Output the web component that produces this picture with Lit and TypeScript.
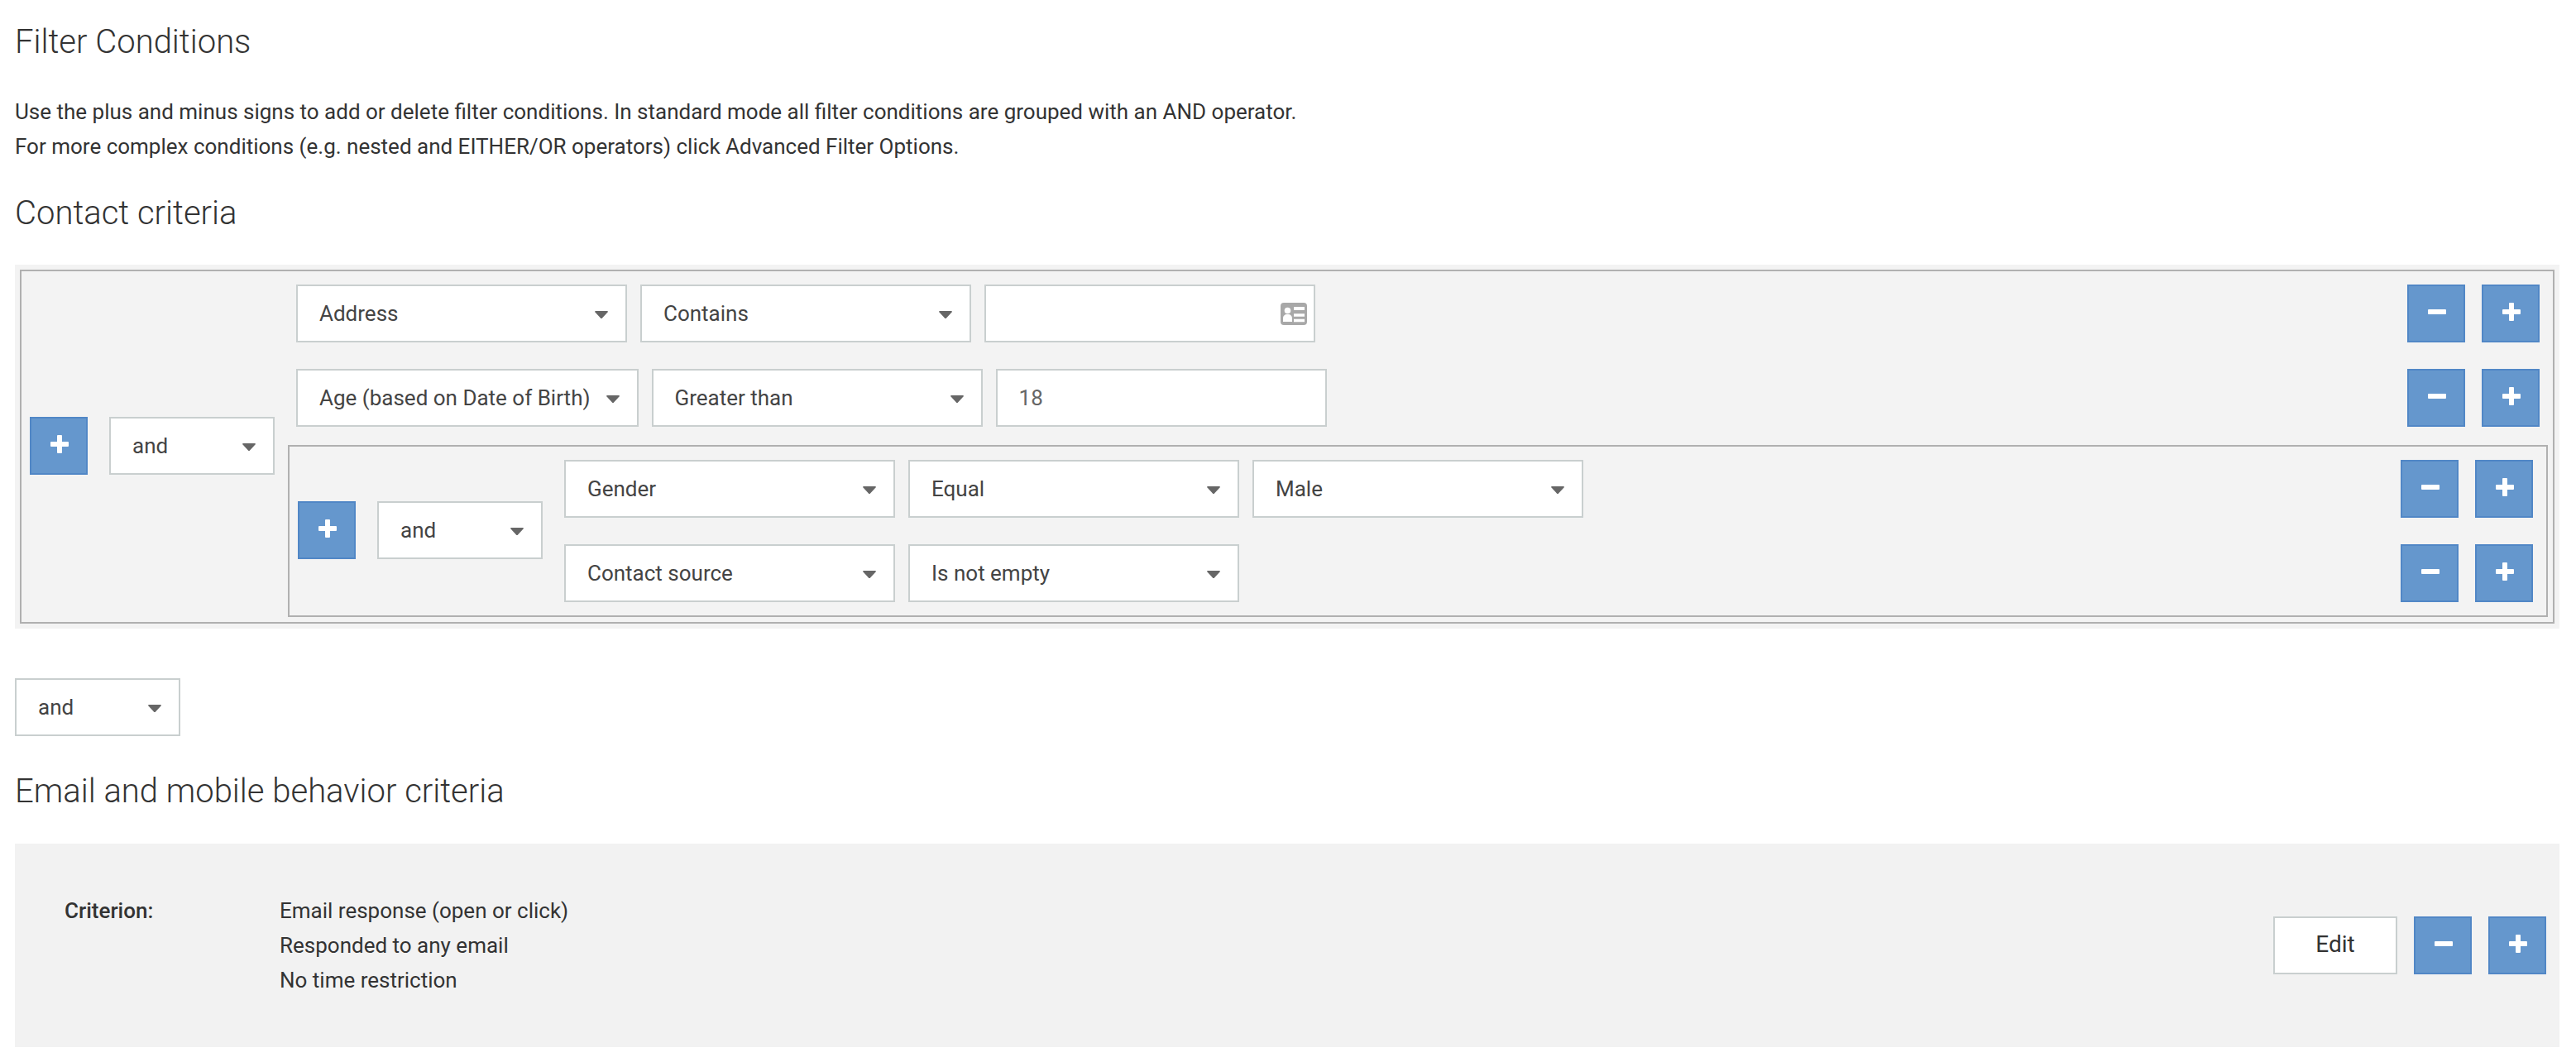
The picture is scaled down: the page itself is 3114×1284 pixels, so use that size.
import { LitElement, html, css } from "lit";
import { customElement } from "lit/decorators.js";

const plusIcon = html`<svg class="ico" width="22" height="22" viewBox="0 0 22 22"><path d="M9 0h4a1 1 0 0 1 1 1v7h7a1 1 0 0 1 1 1v4a1 1 0 0 1-1 1h-7v7a1 1 0 0 1-1 1H9a1 1 0 0 1-1-1v-7H1a1 1 0 0 1-1-1V9a1 1 0 0 1 1-1h7V1a1 1 0 0 1 1-1z" fill="#fff"/></svg>`;
const minusIcon = html`<svg class="ico" width="22" height="6" viewBox="0 0 22 6"><rect width="22" height="6" rx="1" fill="#fff"/></svg>`;
const plus = html`<button class="btn">${plusIcon}</button>`;
const minus = html`<button class="btn">${minusIcon}</button>`;
const actions = html`<div class="actions">${minus}${plus}</div>`;

function select(label: string, kind = "") {
  return html`<div class="select ${kind}"><span class="label">${label}</span><svg class="arrow" width="16" height="9" viewBox="0 0 16 9"><path d="M.6 0h14.8l.6 1-7.4 8h-1.2L0 1z" fill="#666"/></svg></div>`;
}

@customElement("app-root")
export class AppRoot extends LitElement {
  static styles = css`
    :host { display: block; background: #fff; font-family: Roboto, "Liberation Sans", sans-serif; color: #333; min-height: 1284px; }
    * { box-sizing: border-box; }
    .page { padding: 27px 20px 18px 18px; }
    h2 { margin: 0; font-weight: 300; font-size: 40px; line-height: 48px; color: #333; }
    .intro { margin: 39px 0 36px; font-size: 26px; line-height: 42px; color: #333; }
    .intro div { white-space: nowrap; }
    .panel { margin-top: 38px; padding: 6px; background: #f3f3f3; }
    .group { display: flex; align-items: center; border: 2px solid #b0b0b0; padding: 0 0 0 10px; }
    .lead { display: flex; gap: 26px; margin-right: 26px; margin-bottom: 2px; flex: none; }
    .conds { flex: 1; min-width: 0; display: flex; flex-direction: column; gap: 32px; padding: 16px 16px 6px 0; }
    .nested > .conds { padding-bottom: 16px; }
    .nested { margin: -10px -10px 0 -10px; }
    .row { display: flex; gap: 16px; align-items: center; }
    .actions { display: flex; gap: 20px; margin-left: auto; }
    .btn { width: 70px; height: 70px; padding: 0; margin: 0; background: #6597cd; border: 2px solid #5187c6; display: flex; align-items: center; justify-content: center; border-radius: 0; }
    .ico { display: block; margin: 0 0 4px 2px; }
    .select, .input { width: 400px; height: 70px; flex: none; background: #fff; border: 2px solid #c9cfcf; display: flex; align-items: center; font-size: 26px; color: #444; padding: 0 21px 0 26px; white-space: nowrap; }
    .select { justify-content: space-between; }
    .select.auto { width: auto; gap: 19px; }
    .select.small { width: 200px; }
    .arrow { display: block; margin-top: 3px; flex: none; }
    .label { display: block; }
    .input { justify-content: flex-end; padding-right: 8px; }
    .input.value { justify-content: flex-start; padding: 0 26px; color: #666; }
    .spaced { margin-top: 60px; }
    .spaced + h2 { margin-top: 43px; }
    .criterion { margin-top: 39px; background: #f2f2f2; padding: 60px 16px 60px 60px; display: flex; align-items: center; font-size: 26px; line-height: 42px; color: #333; }
    .crit-label { width: 260px; flex: none; align-self: flex-start; font-weight: 500; }
    .crit-actions { display: flex; gap: 20px; margin-left: auto; }
    .edit { width: 150px; height: 70px; background: #fff; border: 2px solid #c9cfcf; font: 400 28px Roboto, sans-serif; color: #333; padding: 0 0 4px; margin: 0; border-radius: 0; }
  `;

  render() {
    return html`<div class="page">
      <h2>Filter Conditions</h2>
      <div class="intro">
        <div>Use the plus and minus signs to add or delete filter conditions. In standard mode all filter conditions are grouped with an AND operator.</div>
        <div>For more complex conditions (e.g. nested and EITHER/OR operators) click Advanced Filter Options.</div>
      </div>
      <h2>Contact criteria</h2>
      <div class="panel">
        <div class="group">
          <div class="lead">${plus}${select("and", "small")}</div>
          <div class="conds">
            <div class="row">${select("Address")}${select("Contains")}
              <div class="input"><svg width="32" height="27" viewBox="0 0 32 27"><path fill="#a8a8a8" fill-rule="evenodd" d="M4 0h24a4 4 0 0 1 4 4v19a4 4 0 0 1-4 4H4a4 4 0 0 1-4-4V4a4 4 0 0 1 4-4zM8.500 5.700a3.800 3.800 0 1 0 0 7.600 3.800 3.800 0 0 0 0-7.600zM3 23h11v-4c0-3-2-5-5-5H8c-3 0-5 2-5 5zM16 5v4h13V5zM16 13.300v3.400h13v-3.400zM16 19.700v3.600h13v-3.600z"/></svg></div>
              ${actions}</div>
            <div class="row">${select("Age (based on Date of Birth)", "auto")}${select("Greater than")}<div class="input value">18</div>${actions}</div>
            <div class="group nested">
              <div class="lead">${plus}${select("and", "small")}</div>
              <div class="conds">
                <div class="row">${select("Gender")}${select("Equal")}${select("Male")}${actions}</div>
                <div class="row">${select("Contact source")}${select("Is not empty")}${actions}</div>
              </div>
            </div>
          </div>
        </div>
      </div>
      <div class="spaced">${select("and", "small")}</div>
      <h2>Email and mobile behavior criteria</h2>
      <div class="criterion">
        <div class="crit-label">Criterion:</div>
        <div><div>Email response (open or click)</div><div>Responded to any email</div><div>No time restriction</div></div>
        <div class="crit-actions"><button class="edit">Edit</button>${minus}${plus}</div>
      </div>
    </div>`;
  }
}
